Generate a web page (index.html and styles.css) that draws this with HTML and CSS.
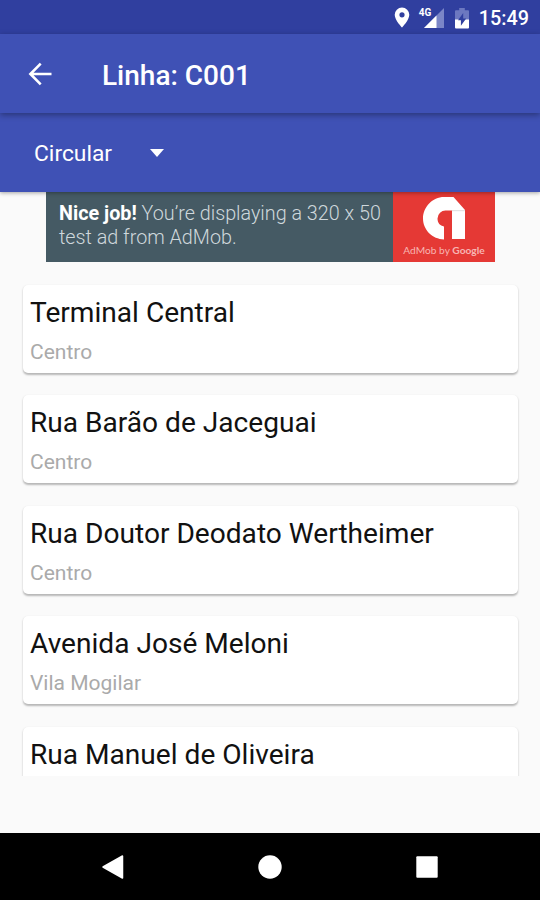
FILE: index.html
```
<!DOCTYPE html>
<html lang="pt-BR">
<head>
<meta charset="utf-8">
<meta name="viewport" content="width=device-width">
<title>Linha: C001</title>
<link rel="stylesheet" href="styles.css">
</head>
<body>
<div class="screen">
  <header class="status">
    <svg class="pin" width="16" height="21" viewBox="0 0 16 21"><path fill="#fff" fill-rule="evenodd" d="M8 .5a7.300 7.300 0 0 0-7.300 7.300C.7 13.200 8 20.500 8 20.500s7.300-7.300 7.300-12.700A7.300 7.300 0 0 0 8 .5zM8 5.200a2.600 2.600 0 1 1 0 5.200 2.600 2.600 0 0 1 0-5.200z"/></svg>
    <div class="signal">
      <span class="net">4G</span>
      <svg width="20" height="20" viewBox="0 0 20 20"><path fill="#7b86c7" d="M20 0v20H0z"/><path fill="#fff" d="M12.500 7.500V20H0z"/><path fill="#303f9f" d="M0 0h10.500v8.500H0z"/></svg>
    </div>
    <svg class="battery" width="14" height="21" viewBox="0 0 14 21"><path fill="#6c78c0" d="M4.200 0h5.600v2.200H13a1 1 0 0 1 1 1V12H0V3.200a1 1 0 0 1 1-1h3.200z"/><path fill="#fff" d="M0 11.500h14V19.500a1 1 0 0 1-1 1H1a1 1 0 0 1-1-1z"/><path fill="#303f9f" d="M8.200 5v5.600h3L5.900 17.800v-5.500H3z"/></svg>
    <span class="clock">15:49</span>
  </header>
  <div class="toolbar">
    <svg class="back" width="24" height="24" viewBox="0 0 24 24"><path fill="none" stroke="#fff" stroke-width="2.600" d="M23.500 12H3M12.700 1.700 2.400 12l10.300 10.300"/></svg>
    <h1 class="title">Linha: C001</h1>
  </div>
  <div class="spinner">
    <span class="choice">Circular</span>
    <svg width="14" height="8" viewBox="0 0 14 8"><path fill="#fff" d="M0 0h14L7 8z"/></svg>
  </div>
  <div class="ad">
    <p class="ad-copy"><span class="ad-line"><b>Nice job!</b> You’re displaying a 320 x 50</span><span class="ad-line">test ad from AdMob.</span></p>
    <div class="ad-brand">
      <svg width="44" height="44" viewBox="0 0 44 44"><path fill="#fff" d="M22 43.500C10.500 43 1 34 1 22.500S10.500 1 22 1h9.500L43 14v29H30V14.500H24a8 8 0 0 0-8.500 8c0 4.500 2.500 7.200 6.500 8z"/><path stroke="#ddd" stroke-width="1" d="M30 14.700h13"/></svg>
      <span class="ad-name">AdMob by <strong>Google</strong></span>
    </div>
  </div>
  <main class="stops">
    <article class="card"><h2>Terminal Central</h2><p>Centro</p></article>
    <article class="card"><h2>Rua Barão de Jaceguai</h2><p>Centro</p></article>
    <article class="card"><h2>Rua Doutor Deodato Wertheimer</h2><p>Centro</p></article>
    <article class="card"><h2>Avenida José Meloni</h2><p>Vila Mogilar</p></article>
    <article class="card"><h2>Rua Manuel de Oliveira</h2></article>
  </main>
  <nav class="nav">
    <svg width="22" height="24" viewBox="0 0 22 24"><path fill="#fff" stroke="#fff" stroke-width="1.500" stroke-linejoin="round" d="M20.500 1v22L1 12z"/></svg>
    <svg width="24" height="24" viewBox="0 0 24 24"><circle cx="12" cy="12" r="11.700" fill="#fff"/></svg>
    <svg width="22" height="22" viewBox="0 0 22 22"><rect x=".3" y=".3" width="21.400" height="21.400" rx="1" fill="#fff"/></svg>
  </nav>
</div>
</body>
</html>
```
FILE: styles.css
```
* { box-sizing: border-box; }
body, h1, h2, p { margin: 0; }
body { font-family: Roboto, "Liberation Sans", sans-serif; background: #fafafa; }
svg { display: block; flex: none; }
.screen { width: 540px; height: 900px; display: flex; flex-direction: column; overflow: hidden; }
.status {
  height: 34px; flex: none; background: #303f9f; color: #fff;
  display: flex; align-items: center; justify-content: flex-end; padding: 1px 11px 0 0;
}
.signal { display: flex; margin: 0 11px 0 9px; padding-top: 1px; }
.signal svg { margin-left: -9px; }
.net { font-size: 10px; line-height: 10px; font-weight: 700; width: 14px; z-index: 1; }
.battery { margin-top: 1px; }
.clock { font-size: 19.800px; line-height: 34px; font-weight: 500; margin-left: 10px; padding-top: 3px; }
.toolbar {
  height: 79px; flex: none; background: #3f51b5; display: flex; align-items: center;
  padding-left: 28px; z-index: 2; box-shadow: 0 2px 6px rgba(0, 0, 0, .35);
}
.title { color: #fff; font-size: 28px; line-height: 34px; font-weight: 500; margin: 5px 0 0 50px; }
.spinner {
  height: 79px; flex: none; background: #3f51b5; display: flex; align-items: center;
  padding-left: 34px; z-index: 1; box-shadow: 0 1px 4px rgba(0, 0, 0, .35);
}
.choice { color: #fff; font-size: 22.800px; line-height: 30px; padding-top: 2px; width: 116px; white-space: nowrap; }
.ad { width: 449px; height: 70px; flex: none; margin-left: 46px; display: flex; }
.ad-copy { width: 347px; background: #455a64; color: #cfd8dc; padding: 10px 0 0 13px; font-weight: 300; font-size: 19.750px; line-height: 24px; white-space: nowrap; }
.ad-line { display: block; }
.ad-copy b { color: #fff; font-weight: 700; }
.ad-brand { width: 102px; background: #e53935; color: #f7b5b3; display: flex; flex-direction: column; align-items: center; padding-top: 4px; }
.ad-name { font: 10.200px/12px Lato, sans-serif; margin-top: 4px; white-space: nowrap; }
.ad-name strong { font-weight: 700; }
.stops { height: 514px; flex: none; overflow: hidden; padding: 23px 22px 0 23px; display: flex; flex-direction: column; gap: 22.400px; }
.card { height: 88px; flex: none; background: #fff; border-radius: 5px; padding: 9px 7px 0; box-shadow: 0 1.500px 2px rgba(0, 0, 0, .27); }
.card h2 { font-size: 28.100px; line-height: 38px; font-weight: 400; color: #111; white-space: nowrap; }
.card p { font-size: 21px; line-height: 26px; margin-top: 7px; color: #aaa; }
.nav { height: 67px; flex: none; margin-top: auto; background: #000; display: flex; align-items: center; padding-left: 102px; gap: 134px; }
```
